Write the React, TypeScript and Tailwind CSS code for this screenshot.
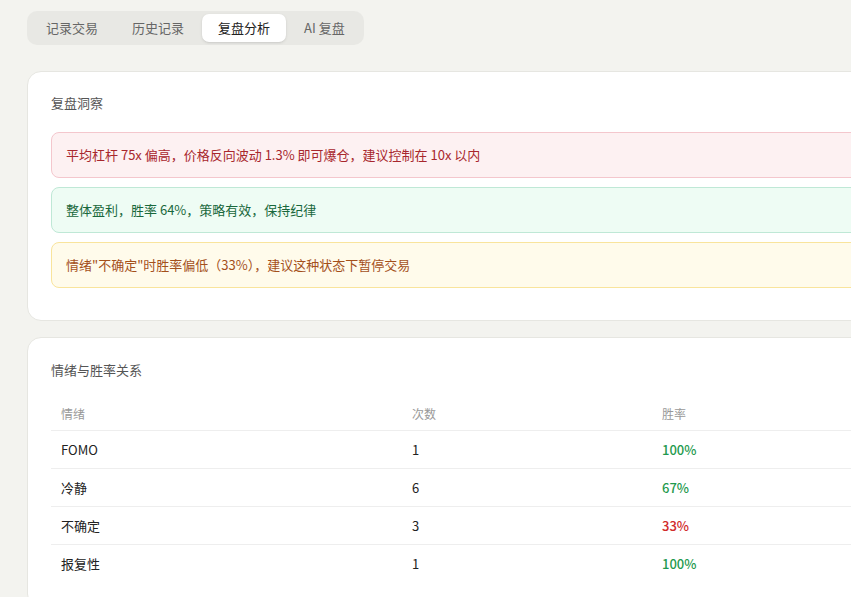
const tabs = ["记录交易", "历史记录", "复盘分析", "AI 复盘"];

const insights = [
  {
    text: "平均杠杆 75x 偏高，价格反向波动 1.3% 即可爆仓，建议控制在 10x 以内",
    cls: "bg-[#fdf1f2] border-[#f4c7cd] text-[#a8272d]",
  },
  {
    text: "整体盈利，胜率 64%，策略有效，保持纪律",
    cls: "bg-[#eefcf4] border-[#bfe8d6] text-[#19683c]",
  },
  {
    text: "情绪\"不确定\"时胜率偏低（33%），建议这种状态下暂停交易",
    cls: "bg-[#fffbeb] border-[#f9e49c] text-[#a4501b]",
  },
];

const rows = [
  { mood: "FOMO", count: 1, rate: 100 },
  { mood: "冷静", count: 6, rate: 67 },
  { mood: "不确定", count: 3, rate: 33 },
  { mood: "报复性", count: 1, rate: 100 },
];

export default function App() {
  return (
    <div className="w-full h-screen overflow-hidden bg-[#f3f3ef] font-['Noto_Sans_CJK_SC','Noto_Sans',sans-serif]">
      <div className="w-[1100px] px-[27px] pt-[11px]">
        {/* Tabs */}
        <div className="inline-flex gap-[2px] p-[3px] rounded-[10px] bg-[#e8e8e4]">
          {tabs.map((t, i) => (
            <div
              key={t}
              className={
                "px-4 h-[28px] flex items-center rounded-[7px] text-[13px] " +
                (i === 2 ? "bg-white text-[#222] shadow-sm" : "text-[#666]")
              }
            >
              {t}
            </div>
          ))}
        </div>

        {/* Insights card */}
        <div className="mt-[26px] bg-white border border-[#e6e6e1] rounded-[14px] px-[23px] pt-[21px] pb-8">
          <div className="text-[13px] leading-5 text-[#555] mb-[19px]">复盘洞察</div>
          <div className="flex flex-col gap-[9px]">
            {insights.map((a) => (
              <div key={a.text} className={"border rounded-[8px] px-[14px] py-3 text-[13px] leading-5 " + a.cls}>
                {a.text}
              </div>
            ))}
          </div>
        </div>

        {/* Mood vs win rate */}
        <div className="mt-4 bg-white border border-[#e6e6e1] rounded-[14px] px-[23px] pt-[22px] pb-6">
          <div className="text-[13px] leading-5 text-[#555] mb-[17px]">情绪与胜率关系</div>
          <div className="grid grid-cols-[351px_250px_1fr] py-2 border-b border-[#eeeeee] text-[12px] leading-[17px] text-[#999]">
            <div className="px-[10px]">情绪</div>
            <div className="px-[10px]">次数</div>
            <div className="px-[10px]">胜率</div>
          </div>
          {rows.map((r, i) => (
            <div
              key={r.mood}
              className={
                "grid grid-cols-[351px_250px_1fr] h-[38px] items-center text-[13px] text-[#222] " +
                (i < rows.length - 1 ? "border-b border-[#eeeeee]" : "")
              }
            >
              <div className="px-[10px]">{r.mood}</div>
              <div className="px-[10px]">{r.count}</div>
              <div className={"px-[10px] font-medium " + (r.rate >= 50 ? "text-[#1f9a4e]" : "text-[#d12b2b]")}>
                {r.rate}%
              </div>
            </div>
          ))}
        </div>
      </div>
    </div>
  );
}
